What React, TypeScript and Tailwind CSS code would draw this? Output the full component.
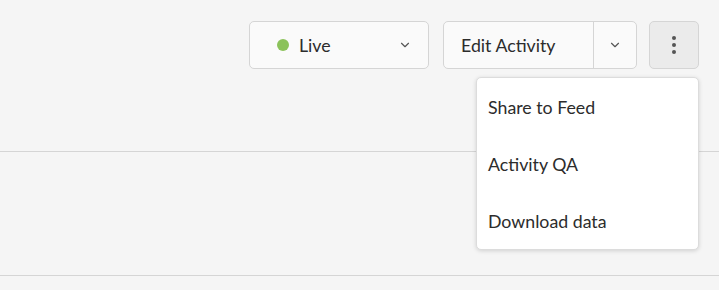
import { ChevronDown } from "lucide-react";

export default function App() {
  return (
    <div
      className="relative w-[719px] h-[290px] bg-[#f5f5f5] overflow-hidden text-[#2c2c2c]"
      style={{ fontFamily: "Lato, 'Open Sans', sans-serif" }}
    >
      {/* Header bar */}
      <div className="h-[152px] border-b border-[#d5d5d5] flex items-start justify-end pt-[21px] pr-[20px]">
        <div className="flex items-center">
          <button className="w-[180px] h-[48px] rounded-[5px] border border-[#d5d5d5] bg-[#fafafa] flex items-center pl-[27px] pr-[16px]">
            <span className="w-[12px] h-[12px] rounded-full bg-[#8bc25a]" />
            <span className="ml-[10px] text-[17.75px]">Live</span>
            <ChevronDown className="ml-auto w-[14px] h-[14px] text-[#555]" strokeWidth={2} />
          </button>
          <div className="ml-[14px] w-[194px] h-[48px] rounded-[5px] border border-[#d5d5d5] bg-[#fafafa] flex items-stretch">
            <div className="flex-1 flex items-center pl-[17px] text-[17.75px]">Edit Activity</div>
            <div className="w-[43px] border-l border-[#d5d5d5] flex items-center justify-center">
              <ChevronDown className="w-[14px] h-[14px] text-[#555]" strokeWidth={2} />
            </div>
          </div>
          <button className="ml-[12px] w-[50px] h-[48px] rounded-[5px] border border-[#d5d5d5] bg-[#ebebeb] flex flex-col items-center justify-center gap-[3px]">
            <span className="w-[4px] h-[4px] rounded-full bg-[#555]" />
            <span className="w-[4px] h-[4px] rounded-full bg-[#555]" />
            <span className="w-[4px] h-[4px] rounded-full bg-[#555]" />
          </button>
        </div>
      </div>
      <div className="h-[124px] border-b border-[#d5d5d5]" />

      {/* Dropdown menu */}
      <div className="absolute left-[476px] top-[77px] w-[223px] bg-white rounded-[5px] border border-[#dcdcdc] shadow-[0_1px_4px_rgba(0,0,0,0.15)] flex flex-col">
        {["Share to Feed", "Activity QA", "Download data"].map((t) => (
          <div key={t} className="h-[57px] shrink-0 flex items-center pl-[11px] pt-[2px] text-[17.75px]">
            {t}
          </div>
        ))}
      </div>
    </div>
  );
}
